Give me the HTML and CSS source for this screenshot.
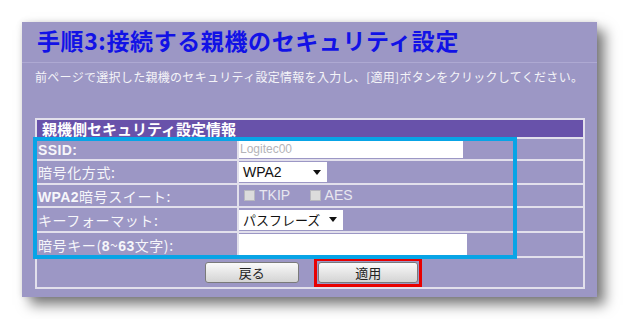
FILE: index.html
```html
<!DOCTYPE html>
<html lang="ja">
<head>
  <meta charset="UTF-8" />
  <title>手順3:接続する親機のセキュリティ設定</title>
  <link rel="stylesheet" href="styles.css">
</head>
<body>

  <div class="panel">
    <h1>手順3:接続する親機のセキュリティ設定</h1>
    <p class="lead">前ページで選択した親機のセキュリティ設定情報を入力し、[適用]ボタンをクリックしてください。</p>

    <div class="frame">
      <table class="settings">
        <tr class="head">
          <th colspan="2">親機側セキュリティ設定情報</th>
        </tr>
        <tr class="r-ssid">
          <td class="label"><b>SSID:</b></td>
          <td class="value"><div class="field ssid">Logitec00</div></td>
        </tr>
        <tr class="r-enc">
          <td class="label">暗号化方式:</td>
          <td class="value"><div class="select enc">WPA2<span class="arrow"></span></div></td>
        </tr>
        <tr class="r-suite">
          <td class="label"><b>WPA2</b>暗号スイート:</td>
          <td class="value">
            <span class="check"><span class="box"></span>TKIP</span>
            <span class="check"><span class="box"></span>AES</span>
          </td>
        </tr>
        <tr class="r-format">
          <td class="label">キーフォーマット:</td>
          <td class="value"><div class="select fmt">パスフレーズ<span class="arrow"></span></div></td>
        </tr>
        <tr class="r-key">
          <td class="label">暗号キー(<b>8</b>~<b>63</b>文字):</td>
          <td class="value"><div class="field key"></div></td>
        </tr>
        <tr class="r-btn">
          <td colspan="2" class="buttons">
            <button class="btn back">戻る</button>
            <span class="mark"><button class="btn apply">適用</button></span>
          </td>
        </tr>
      </table>
      <div class="highlight"></div>
    </div>
  </div>

</body>
</html>
```

FILE: styles.css
```css
body {
  margin: 0;
  padding: 22px;
  background: #ffffff;
  font-family: "Noto Sans CJK JP", "Liberation Sans", sans-serif;
}

.panel {
  width: 575px;
  box-sizing: border-box;
  background: #9c97c5;
  padding: 2px 0 8px;
  box-shadow: 0 0 6px rgba(0, 0, 0, 0.12), 8px 8px 12px rgba(0, 0, 0, 0.5);
}

h1 {
  margin: 0;
  padding: 0 15px 6px;
  font-size: 23px;
  line-height: 32px;
  letter-spacing: 0.6px;
  font-weight: bold;
  color: #1212e6;
  border-bottom: 1px solid #aea9d2;
}

.lead {
  margin: 5px 0 0;
  padding-left: 13px;
  font-size: 12px;
  line-height: 18px;
  letter-spacing: 0.3px;
  color: #f4f4f8;
}

.frame {
  position: relative;
  margin: 32px 0 0 13px;
  width: 550px;
}

.settings {
  width: 550px;
  border-collapse: collapse;
  border: 2px solid #e2e0ec;
}

.settings th,
.settings td {
  border: 2px solid #e2e0ec;
  padding: 0;
}

.settings .head th {
  background: #6852aa;
  color: #ffffff;
  text-align: left;
  font-size: 15px;
  font-weight: bold;
  line-height: 17px;
  height: 17px;
  padding-left: 5px;
}

.label {
  width: 199px;
  color: #f6f6fa;
  font-size: 14px;
  letter-spacing: 0.6px;
  padding-left: 1px !important;
  white-space: nowrap;
}

.label b {
  font-family: "Liberation Sans", sans-serif;
  letter-spacing: 0.4px;
}

.r-ssid td { height: 20px; }
.r-enc td { height: 22px; }
.r-suite td { height: 21px; }
.r-format td { height: 23px; }
.r-key td { height: 23px; }
.r-btn td { height: 24px; }

.value {
  font-family: "Liberation Sans", sans-serif;
}

.field {
  background: #ffffff;
  height: 18px;
  box-sizing: border-box;
  font-size: 12px;
  line-height: 18px;
  color: #b4b4b8;
  padding-left: 1px;
}

.ssid { width: 224px; }
.key { width: 228px; height: 21px; }

.select {
  display: flex;
  align-items: center;
  justify-content: space-between;
  background: #ffffff;
  height: 20px;
  box-sizing: border-box;
  padding: 0 6px 0 4px;
  font-size: 14px;
  color: #111111;
}

.enc { width: 88px; }
.fmt { width: 104px; font-family: "Noto Sans CJK JP", sans-serif; font-size: 13px; }

.arrow {
  width: 0;
  height: 0;
  border-left: 4px solid transparent;
  border-right: 4px solid transparent;
  border-top: 5px solid #111111;
}

.check {
  display: inline-flex;
  align-items: center;
  gap: 4px;
  font-size: 14px;
  color: #e8e7f0;
  margin-left: 5px;
  margin-right: 10px;
}

.check .box {
  width: 9px;
  height: 9px;
  background: #dcdcdc;
  border: 1px solid #b8b8c0;
}

.buttons {
  text-align: center;
  padding-left: 7px !important;
}

.btn {
  height: 21px;
  padding: 0;
  border: 1px solid #7a7a7a;
  border-radius: 3px;
  background: linear-gradient(#fafafa, #e6e6e6 50%, #d4d4d4);
  font-family: "Noto Sans CJK JP", sans-serif;
  font-size: 13px;
  color: #222222;
  vertical-align: middle;
}

.back {
  width: 94px;
  margin-right: 12px;
}

.apply {
  width: 100px;
  display: block;
}

.mark {
  display: inline-block;
  vertical-align: middle;
  padding: 1px;
  border: 3px solid #e80000;
}

.highlight {
  position: absolute;
  left: -2px;
  top: 19px;
  width: 484px;
  height: 122px;
  border: 4px solid #08a4e6;
  box-sizing: border-box;
  pointer-events: none;
}
```
